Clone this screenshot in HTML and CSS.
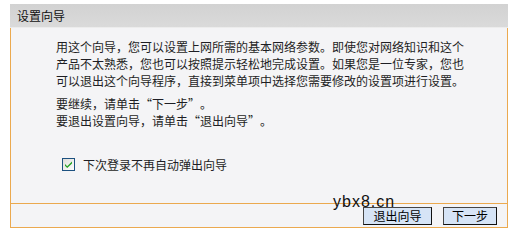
FILE: index.html
```html
<!DOCTYPE html>
<html lang="zh-CN">
<head>
<meta charset="utf-8">
<link rel="stylesheet" href="styles.css">
</head>
<body>
<div class="panel">
  <div class="title">设置向导</div>
  <div class="content">
    <p class="para">用这个向导，您可以设置上网所需的基本网络参数。即使您对网络知识和这个产品不太熟悉，您也可以按照提示轻松地完成设置。如果您是一位专家，您也可以退出这个向导程序，直接到菜单项中选择您需要修改的设置项进行设置。</p>
    <p class="para gap">要继续，请单击<span class="qo">“</span>下一步<span class="qc">”</span>。<br>要退出设置向导，请单击<span class="qo">“</span>退出向导<span class="qc">”</span>。</p>
    <label class="check">
      <span class="box"><svg width="13" height="13" viewBox="0 0 13 13"><defs><linearGradient id="g" x1="0" y1="0" x2="1" y2="1"><stop offset="0" stop-color="#dcdcd7"/><stop offset="1" stop-color="#ffffff"/></linearGradient></defs><rect x="0.5" y="0.5" width="12" height="12" fill="url(#g)" stroke="#1c5180"/><path d="M3 6 L5.2 8.3 L10 3.6 L10 5.4 L5.2 10.1 L3 7.8 Z" fill="#21a121"/></svg></span>
      <span>下次登录不再自动弹出向导</span>
    </label>
  </div>
  <div class="footer">
    <span class="mark">ybx8.cn</span>
    <button class="btn wide">退出向导</button>
    <button class="btn">下一步</button>
  </div>
</div>
</body>
</html>
```

FILE: styles.css
```css
html, body {
  margin: 0;
  padding: 0;
  background: #ffffff;
}
body {
  font-family: "Noto Sans CJK SC", "Liberation Sans", sans-serif;
  font-size: 12px;
  color: #1e1e24;
}
.panel {
  position: relative;
  margin: 4px 0 0 10px;
  width: 498px;
}
.title {
  height: 24px;
  line-height: 24px;
  padding-left: 7px;
  background: linear-gradient(#d2d2d2, #dadada);
  font-size: 12px;
  color: #111;
  border-bottom: 1px solid #ececec;
  box-sizing: border-box;
}
.content {
  background: #f4f4f6;
  border-left: 1px solid #eba94f;
  border-right: 1px solid #eba94f;
  padding: 10px 0 30px 45px;
}
.para {
  margin: 0;
  width: 409px;
  line-height: 17px;
}
.qo,
.qc {
  display: inline-block;
  width: 12px;
}
.qo {
  text-align: right;
}
.qc {
  text-align: left;
}
.gap {
  margin-top: 6px;
}
.check {
  display: flex;
  align-items: center;
  gap: 8px;
  margin: 27px 0 0 6px;
  line-height: 17px;
}
.box {
  display: flex;
  width: 13px;
  height: 13px;
}
.footer {
  display: flex;
  justify-content: flex-end;
  gap: 11px;
  height: 25px;
  box-sizing: border-box;
  padding: 3px 10px 0 0;
  background: #f4f4f6;
  border: 1px solid #eba94f;
}
.btn {
  height: 18px;
  width: 54px;
  padding: 0;
  margin: 0;
  font-family: "Noto Sans CJK SC", sans-serif;
  font-size: 12px;
  line-height: 16px;
  color: #000;
  background: #d6e4f6;
  border: 1px solid #444;
  border-right-color: #111;
  border-bottom-color: #111;
}
.wide {
  width: 69px;
}
.mark {
  position: absolute;
  left: 323px;
  top: 189px;
  font-family: "Liberation Sans", sans-serif;
  font-size: 16px;
  letter-spacing: 1px;
  color: #111;
  line-height: 18px;
}
```
